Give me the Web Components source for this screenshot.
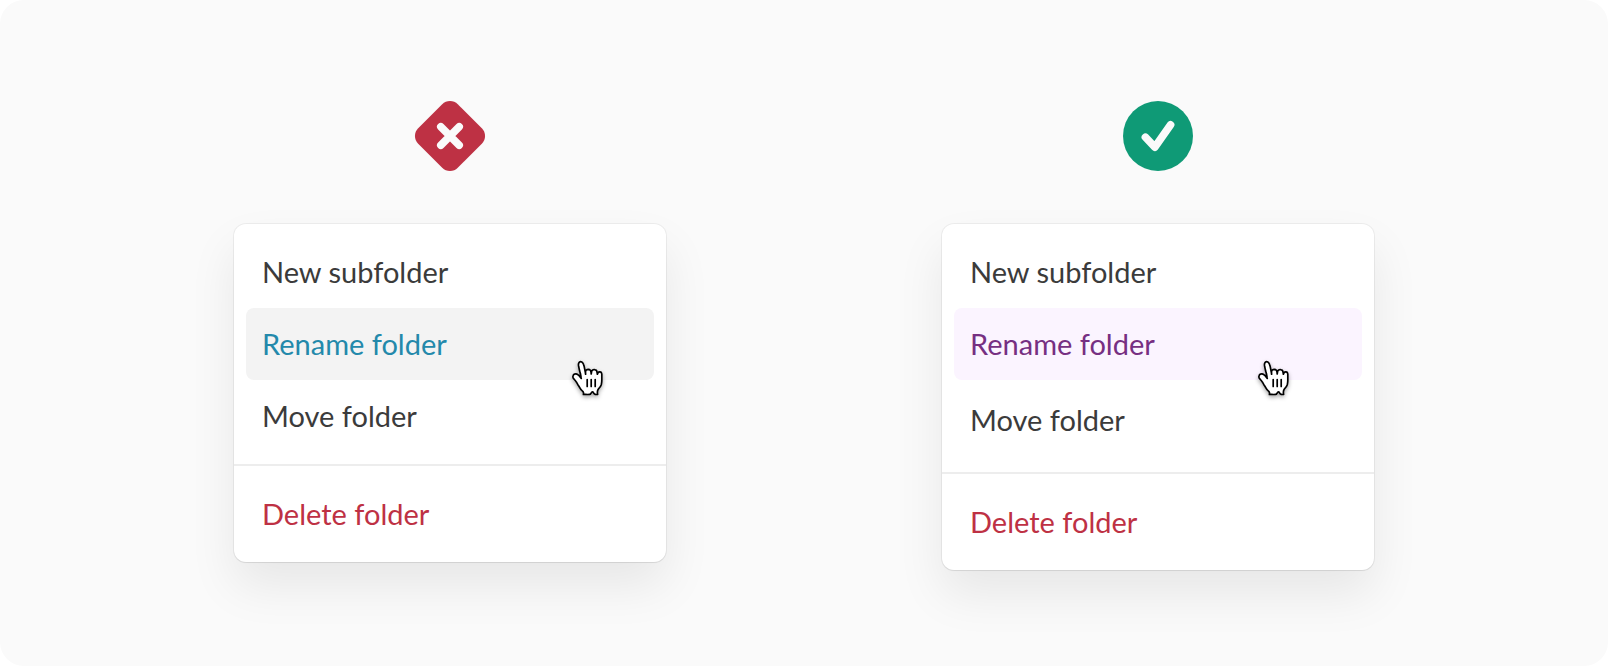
<!DOCTYPE html>
<html lang="en">
<head>
  <meta charset="UTF-8">
  <meta name="viewport" content="width=device-width, initial-scale=1">
  <title>Folder menu hover states</title>
  <style>
    body {
      margin: 0;
      background: #ffffff;
      font-family: Lato, "Liberation Sans", sans-serif;
      color: #3b3b3b;
    }
  </style>
</head>
<body>
  <compare-board>
    <compare-example verdict="bad">
      <context-menu>
        <menu-group>
          <menu-item>New subfolder</menu-item>
          <menu-item tone="blue">Rename folder<hand-cursor slot="cursor"></hand-cursor></menu-item>
          <menu-item>Move folder</menu-item>
        </menu-group>
        <menu-group>
          <menu-item tone="danger">Delete folder</menu-item>
        </menu-group>
      </context-menu>
    </compare-example>
    <compare-example verdict="good">
      <context-menu>
        <menu-group>
          <menu-item>New subfolder</menu-item>
          <menu-item tone="purple">Rename folder<hand-cursor slot="cursor"></hand-cursor></menu-item>
          <menu-item size="tall">Move folder</menu-item>
        </menu-group>
        <menu-group>
          <menu-item tone="danger">Delete folder</menu-item>
        </menu-group>
      </context-menu>
    </compare-example>
  </compare-board>

  <script>
    // Rounded panel that holds the two examples side by side
    class CompareBoard extends HTMLElement {
      constructor() {
        super();
        this.attachShadow({ mode: "open" });
        this.shadowRoot.innerHTML = `
          <style>
            :host {
              display: grid;
              grid-template-columns: repeat(auto-fit, minmax(480px, 1fr));
              align-items: start;
              box-sizing: border-box;
              min-height: 100vh;
              padding: 100px 96px 64px;
              border-radius: 24px;
              background: #fafafa;
            }
          </style>
          <slot></slot>
        `;
      }
    }

    // Verdict icons, both centred on 0,0
    const verdicts = {
      bad: {
        label: "Don't",
        icon: `
          <rect x="-28" y="-28" width="56" height="56" rx="11" transform="rotate(45)" fill="#be3144"/>
          <path d="M-9.2-9.2 9.2 9.2M9.2-9.2-9.2 9.2"/>
        `,
      },
      good: {
        label: "Do",
        icon: `
          <circle r="35" fill="#0f9a76"/>
          <path d="M-12.6 1.2-3.2 11.2 12.6-11.2"/>
        `,
      },
    };

    class CompareExample extends HTMLElement {
      constructor() {
        super();
        this.attachShadow({ mode: "open" });
      }

      connectedCallback() {
        const { label, icon } = verdicts[this.getAttribute("verdict")];
        this.shadowRoot.innerHTML = `
          <style>
            :host {
              display: flex;
              flex-direction: column;
              align-items: center;
              gap: 52px;
            }

            svg {
              display: block;
              width: 72px;
              height: 72px;
            }

            path {
              fill: none;
              stroke: #fafafa;
              stroke-width: 7.6;
              stroke-linecap: round;
              stroke-linejoin: round;
            }
          </style>
          <svg viewBox="-36 -36 72 72" role="img" aria-label="${label}">${icon}</svg>
          <slot></slot>
        `;
      }
    }

    class ContextMenu extends HTMLElement {
      constructor() {
        super();
        this.attachShadow({ mode: "open" });
        this.shadowRoot.innerHTML = `
          <style>
            :host {
              display: block;
              width: 432px;
              max-width: 100%;
              border-radius: 12px;
              background: #ffffff;
              box-shadow:
                0 0 0 1px rgba(0, 0, 0, 0.05),
                0 1px 1px rgba(0, 0, 0, 0.06),
                0 24px 48px rgba(0, 0, 0, 0.08);
            }

            ::slotted(menu-group:not(:first-child)) {
              border-top: 2px solid #ededed;
            }
          </style>
          <slot></slot>
        `;
      }

      connectedCallback() {
        this.setAttribute("role", "menu");
      }
    }

    class MenuGroup extends HTMLElement {
      constructor() {
        super();
        this.attachShadow({ mode: "open" });
        this.shadowRoot.innerHTML = `
          <style>
            :host {
              display: flex;
              flex-direction: column;
              padding: 12px;
            }
          </style>
          <slot></slot>
        `;
      }

      connectedCallback() {
        this.setAttribute("role", "group");
      }
    }

    class MenuItem extends HTMLElement {
      constructor() {
        super();
        this.attachShadow({ mode: "open" });
        this.shadowRoot.innerHTML = `
          <style>
            :host {
              display: block;
              position: relative;
              --item-height: 72px;
            }

            :host([size="tall"]) {
              --item-height: 80px;
            }

            button {
              display: block;
              width: 100%;
              height: var(--item-height);
              padding: 0 16px;
              border: 0;
              border-radius: 8px;
              background: transparent;
              color: inherit;
              font: inherit;
              font-size: 29px;
              line-height: 36px;
              text-align: left;
              cursor: pointer;
            }

            :host([tone="blue"]) button {
              background: #f3f3f3;
              color: #2389ab;
            }

            :host([tone="purple"]) button {
              background: #fbf4ff;
              color: #762f82;
            }

            :host([tone="danger"]) button {
              color: #be3144;
            }

            /* The pointer hangs over the lower edge of the row */
            ::slotted([slot="cursor"]) {
              position: absolute;
              top: 51px;
              right: 48px;
              z-index: 1;
            }

            :host([tone="purple"]) ::slotted([slot="cursor"]) {
              right: 70px;
            }
          </style>
          <button type="button" role="menuitem"><slot></slot></button>
          <slot name="cursor"></slot>
        `;
      }
    }

    class HandCursor extends HTMLElement {
      constructor() {
        super();
        this.attachShadow({ mode: "open" });
        this.shadowRoot.innerHTML = `
          <style>
            :host {
              display: block;
              pointer-events: none;
            }

            svg {
              display: block;
              width: 34px;
              height: 36px;
              overflow: visible;
              filter: drop-shadow(0 2px 2px rgba(0, 0, 0, 0.35));
            }
          </style>
          <svg viewBox="8 7 17 18" aria-hidden="true" stroke="#000000" stroke-width="0.85" stroke-linecap="round" stroke-linejoin="round">
            <path fill="#ffffff" d="m11.3 20.4c-.3-.4-.6-1.1-1.2-2-.3-.5-1.2-1.5-1.5-1.9-.2-.4-.2-.6-.1-1 .1-.6.7-1.1 1.4-1.1.5 0 1 .4 1.4.7.2.2.5.6.7.8s.2.3.4.5c.2.3.3.5.2.1-.1-.5-.2-1.3-.4-2.1-.1-.6-.2-.7-.3-1.1-.1-.5-.2-.8-.3-1.3-.1-.3-.2-1.1-.3-1.5-.1-.5-.1-1.4.3-1.8.3-.3.9-.4 1.3-.2.5.3.8 1 .9 1.3.2.5.4 1.2.5 2 .2 1 .5 2.5.5 2.8 0-.4-.1-1.1 0-1.5.1-.3.3-.7.7-.8.3-.1.6-.1.9-.1.3.1.6.3.8.5.4.6.4 1.9.4 1.8.1-.4.1-1.2.3-1.6.1-.2.5-.4.7-.5.3-.1.7-.1 1 0 .2 0 .6.3.7.5.2.3.3 1.3.4 1.7 0 .1.1-.4.3-.7.4-.6 1.8-.8 1.9.6v1.7 1.3c0 .5-.1 1.6-.2 2.1-.1.3-.4 1-.7 1.4 0 0-1.1 1.2-1.2 1.8-.1.6-.1.6-.1 1s.1.9.1.9-.8.1-1.2 0c-.4-.1-.9-.8-1-1.1-.2-.3-.5-.3-.7 0-.2.4-.7 1.1-1.1 1.1-.7.1-2.1 0-3.1 0 0 0 .2-1-.2-1.4-.3-.3-.8-.8-1.1-1.1z"/>
            <path fill="none" d="M15.6 17.3v3.4M17.6 17.3v3.4M19.6 17.3v3.4"/>
          </svg>
        `;
      }
    }

    customElements.define("compare-board", CompareBoard);
    customElements.define("compare-example", CompareExample);
    customElements.define("context-menu", ContextMenu);
    customElements.define("menu-group", MenuGroup);
    customElements.define("menu-item", MenuItem);
    customElements.define("hand-cursor", HandCursor);
  </script>
</body>
</html>
